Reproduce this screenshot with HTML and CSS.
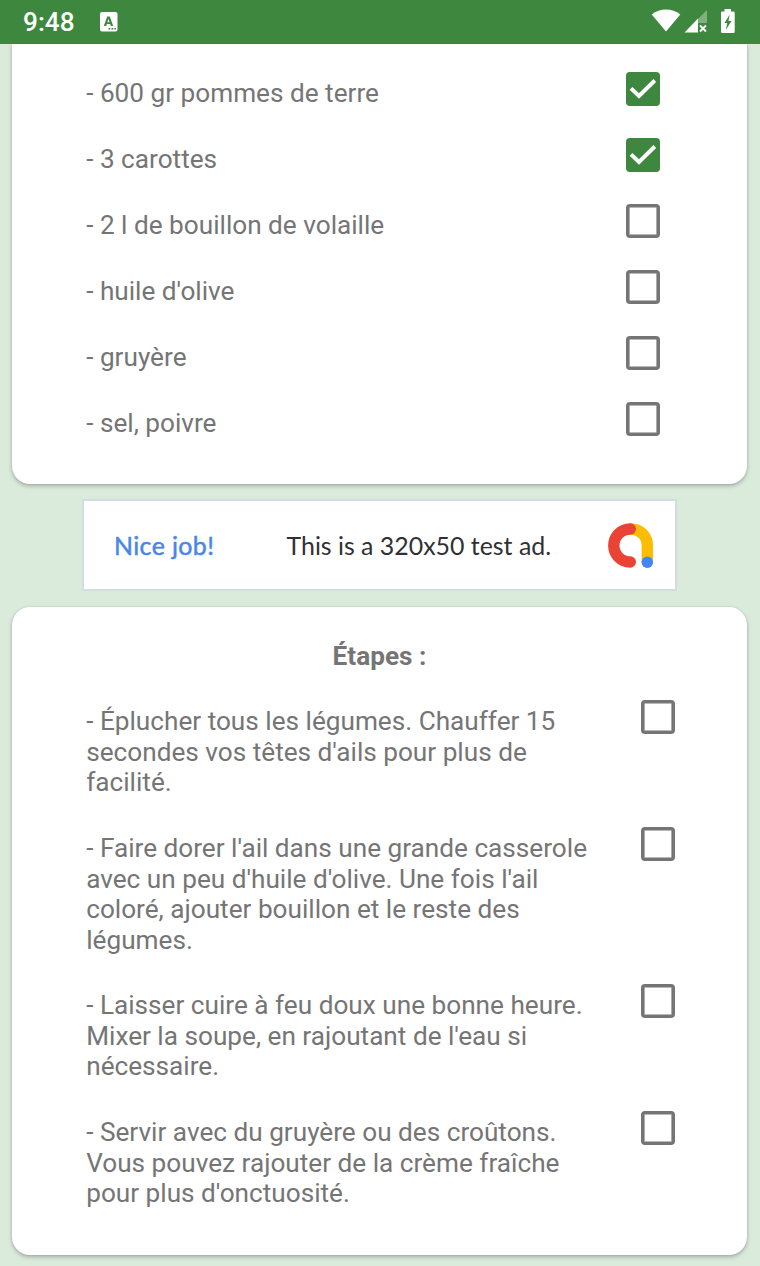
FILE: index.html
```html
<!DOCTYPE html>
<html lang="fr">
<head>
<meta charset="utf-8">
<title>Recette</title>
<link rel="stylesheet" href="styles.css">
</head>
<body>
<header class="status">
  <span class="clock">9:48</span>
  <svg class="notif" width="18" height="20" viewBox="0 0 18 20"><rect width="17.5" height="19.5" rx="2" fill="#fff"/><path fill="#3d883e" fill-rule="evenodd" d="M3.800 14 7.200 4.500h2.600L13.200 14h-2.400l-.6-1.900H6.800L6.200 14zM7.400 10.200h2.200L8.500 6.900zM8.500 16h1.800v1.500H8.500zM11.500 16h1.800v1.500h-1.800zM14.300 16h1.600v1.500h-1.600z"/></svg>
  <svg class="signals" width="86" height="28" viewBox="650 7 86 28"><path fill="#fff" d="M651.700 14.500C660 7.800 672 7.800 680.300 14.500L666 31.500z"/><path fill="#fff" opacity=".35" d="M707 10v13h-9v-4z"/><path fill="#fff" d="M684.500 32.500 698 18.500v14z"/><path stroke="#fff" stroke-width="1.900" d="m700 25.500 6 6m0-6-6 6"/><path fill="#fff" fill-rule="evenodd" d="M724.500 9h6.500v2.500h2.500q1.200 0 1.200 1.200v19q0 1.200-1.200 1.200h-11.300q-1.200 0-1.200-1.200v-19q0-1.200 1.200-1.200h2.300zM729.700 14.500l-5.200 8.500h2.800l-1.500 7 5.700-9h-3z"/></svg>
</header>
<main class="page">
  <section class="card ingredients">
    <div class="row"><p>- 600 gr pommes de terre</p><i class="box on"><svg viewBox="0 0 34 34"><path d="m5 16.300 8 7.700L28.800 8.500"/></svg></i></div>
    <div class="row"><p>- 3 carottes</p><i class="box on"><svg viewBox="0 0 34 34"><path d="m5 16.300 8 7.700L28.800 8.500"/></svg></i></div>
    <div class="row"><p>- 2 l de bouillon de volaille</p><i class="box"></i></div>
    <div class="row"><p>- huile d'olive</p><i class="box"></i></div>
    <div class="row"><p>- gruyère</p><i class="box"></i></div>
    <div class="row"><p>- sel, poivre</p><i class="box"></i></div>
  </section>
  <aside class="ad">
    <span class="nice">Nice job!</span>
    <span class="copy">This is a 320x50 test ad.</span>
    <svg class="logo" width="46" height="46" viewBox="0 0 46 46" fill="none" stroke-width="11.400" stroke-linecap="round"><path stroke="#fbbc04" d="M22.500 6C32 6 39.300 13 39.300 22.500V39"/><path stroke="#ea4335" d="M22.300 6a16.500 16.500 0 0 0 0 33"/><circle cx="39.300" cy="39.300" r="5.700" fill="#4285f4"/></svg>
  </aside>
  <section class="card steps">
    <h2>Étapes :</h2>
    <div class="row"><p>- Éplucher tous les légumes. Chauffer 15<br>secondes vos têtes d'ails pour plus de<br>facilité.</p><i class="box"></i></div>
    <div class="row"><p>- Faire dorer l'ail dans une grande casserole<br>avec un peu d'huile d'olive. Une fois l'ail<br>coloré, ajouter bouillon et le reste des<br>légumes.</p><i class="box"></i></div>
    <div class="row"><p>- Laisser cuire à feu doux une bonne heure.<br>Mixer la soupe, en rajoutant de l'eau si<br>nécessaire.</p><i class="box"></i></div>
    <div class="row"><p>- Servir avec du gruyère ou des croûtons.<br>Vous pouvez rajouter de la crème fraîche<br>pour plus d'onctuosité.</p><i class="box"></i></div>
  </section>
</main>
</body>
</html>
```
FILE: styles.css
```css
* { box-sizing: border-box; margin: 0; }
body {
  height: 1266px;
  overflow: hidden;
  background: #daebdc;
  color: #757575;
  font: 26.180px/30.5px Roboto, sans-serif;
}
.status {
  height: 43.600px;
  padding: 0 24px 0 23px;
  display: flex;
  align-items: flex-start;
  background: #3d883e;
  color: #fff;
}
.clock { width: 76.500px; margin-top: 7px; font-weight: 500; }
.notif { margin-top: 12px; }
.signals { margin: 7px 0 0 auto; }
.page { padding: 0 13px 0 12px; }
.card {
  background: #fff;
  border-radius: 18px;
  box-shadow: 0 2px 4px rgba(0, 0, 0, .26), 0 0 2px rgba(0, 0, 0, .1);
}
.ingredients {
  height: 440.500px;
  padding: 34.600px 87px 0 74.200px;
  border-radius: 0 0 18px 18px;
  clip-path: inset(0 -8px -8px -8px);
}
.row {
  display: flex;
  justify-content: space-between;
  align-items: flex-start;
  padding-bottom: 35.500px;
}
.row p { white-space: nowrap; }
.box {
  flex: none;
  width: 34px;
  height: 34px;
  margin-top: -6px;
  border: 3px solid #757575;
  border-radius: 4px;
  box-shadow: inset 0 0 0 .6px #757575;
}
.box.on { border: 0; background: #3d883e; box-shadow: none; }
.box svg { display: block; fill: none; stroke: #fff; stroke-width: 3.900; }
.ad {
  width: 594.500px;
  height: 92px;
  margin: 15.300px 0 15.300px 70px;
  padding: 0 21px 0 30px;
  display: flex;
  align-items: center;
  border: 2px solid #d2dde1;
  background: #fff;
  font-family: Lato, sans-serif;
  font-size: 24.900px;
}
.nice {
  width: 172.500px;
  color: #4a86e8;
  letter-spacing: .4px;
  -webkit-text-stroke: .5px #4a86e8;
}
.copy { color: #303134; white-space: nowrap; }
.logo { position: relative; top: 1px; margin-left: auto; }
.steps { height: 648.300px; padding: 34px 72px 0 74.200px; }
.steps h2 {
  margin: 0 -73px 35.300px -75.200px;
  font-size: 26.180px;
  line-height: 30.500px;
  text-align: center;
}
.steps .row { padding-bottom: 35.200px; }
```
